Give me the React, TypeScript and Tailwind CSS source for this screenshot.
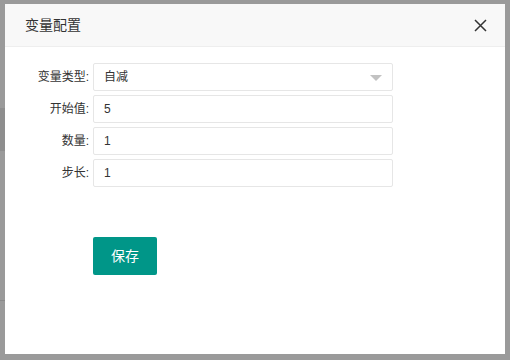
const rows = [
  { label: '开始值:', value: '5' },
  { label: '数量:', value: '1' },
  { label: '步长:', value: '1' },
];

export default function App() {
  return (
    <div
      className="relative h-[360px] w-[510px] overflow-hidden bg-[#9a9a9a] pl-[5px] pt-[4px]"
      style={{ fontFamily: '"Liberation Sans", "Noto Sans CJK SC", sans-serif' }}
    >
      {/* backdrop page remnants on the left */}
      <div className="absolute left-0 top-[108px] h-[43px] w-[5px] bg-[#8e8e8e]" />
      <div className="absolute left-0 top-[300px] h-px w-[5px] bg-[#8a8a8a]" />

      <div className="flex h-[350px] w-[500px] flex-col bg-white">
        <div className="flex h-[43px] items-center justify-between border-b border-[#eeeeee] bg-[#f8f8f8] pl-5 pr-[18px]">
          <span className="text-[14px] text-[#333]">变量配置</span>
          <svg width="13" height="13" viewBox="0 0 13 13" className="text-[#333]">
            <path d="M1 1 L12 12 M12 1 L1 12" stroke="currentColor" strokeWidth="1.5" />
          </svg>
        </div>

        <div className="flex flex-col gap-[4px] pt-[16px] text-[12px] text-[#333]">
          <div className="flex items-center">
            <label className="w-[84px] text-right">变量类型:</label>
            <div className="relative ml-[4px] flex h-[28px] w-[300px] items-center rounded-[2px] border border-[#e6e6e6] pl-[10px]">
              自减
              <span className="absolute right-[10px] top-[11px] h-0 w-0 border-x-[6px] border-t-[6px] border-x-transparent border-t-[#c2c2c2]" />
            </div>
          </div>
          {rows.map((r) => (
            <div key={r.label} className="flex items-center">
              <label className="w-[84px] text-right">{r.label}</label>
              <div className="ml-[4px] flex h-[28px] w-[300px] items-center rounded-[2px] border border-[#e6e6e6] pl-[10px]">
                {r.value}
              </div>
            </div>
          ))}
        </div>

        <div className="pl-[88px] pt-[50px]">
          <button className="h-[38px] w-[64px] rounded-[2px] bg-[#009688] text-[14px] text-white">保存</button>
        </div>
      </div>
    </div>
  );
}
